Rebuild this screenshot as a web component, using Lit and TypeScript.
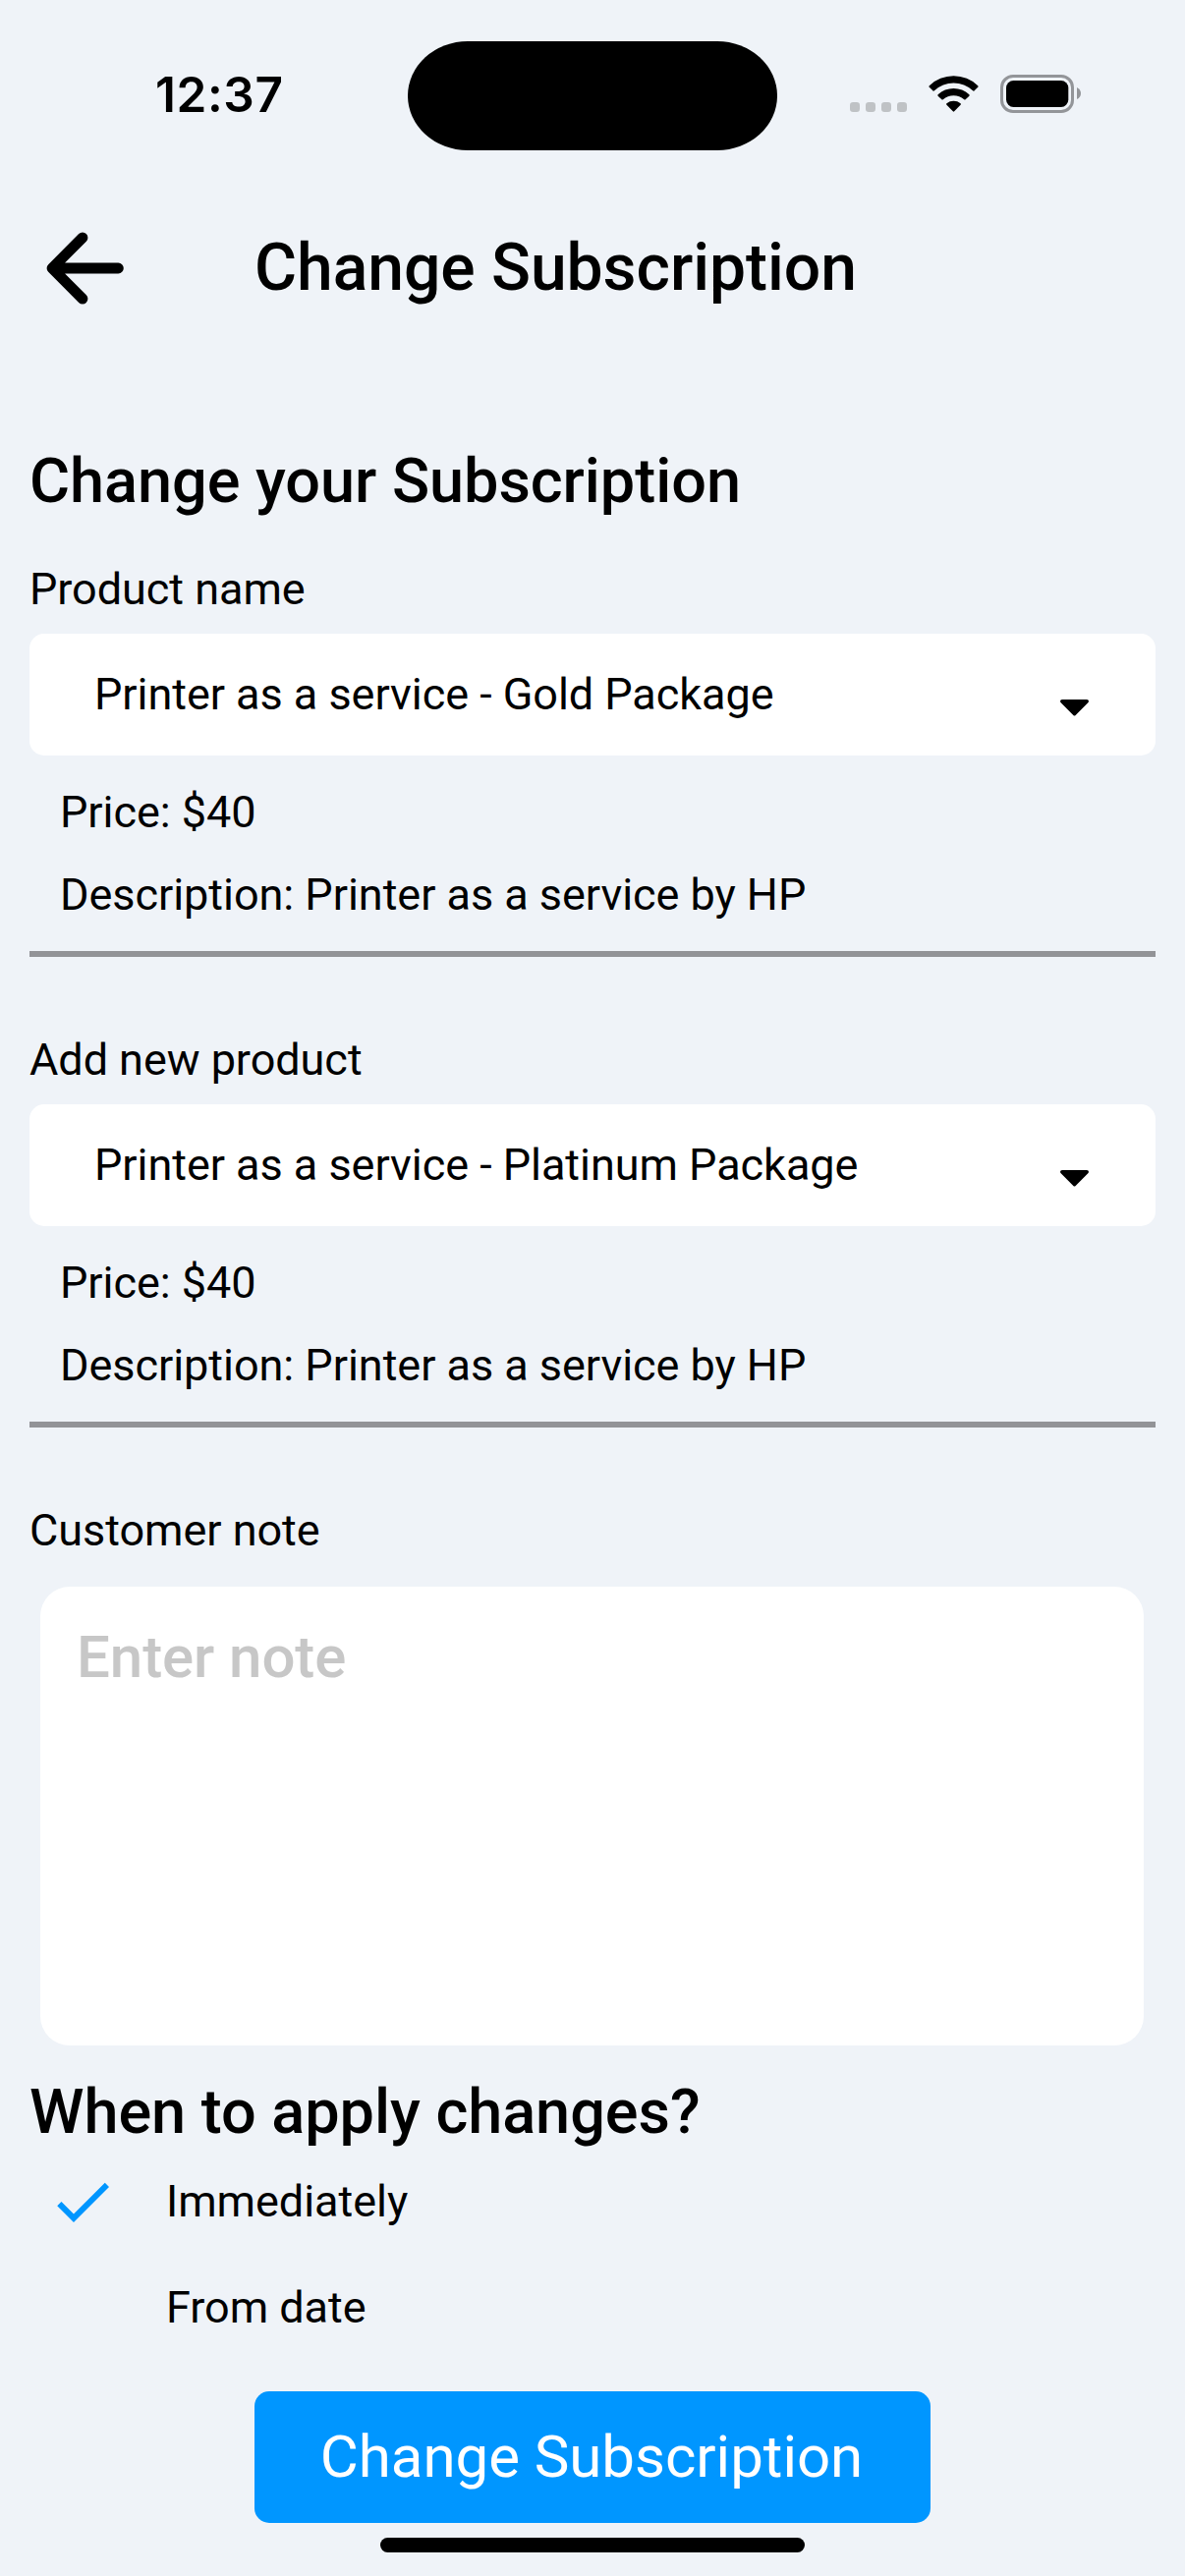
import { LitElement, html, css, svg, nothing } from "lit";
import { customElement, property, state } from "lit/decorators.js";

interface Product {
  label: string;
  name: string;
  price: string;
  description: string;
}

const PRODUCTS: Product[] = [
  {
    label: "Product name",
    name: "Printer as a service - Gold Package",
    price: "$40",
    description: "Printer as a service by HP",
  },
  {
    label: "Add new product",
    name: "Printer as a service - Platinum Package",
    price: "$40",
    description: "Printer as a service by HP",
  },
];

const TIMINGS = ["Immediately", "From date"];

@customElement("status-bar")
class StatusBar extends LitElement {
  static styles = css`
    :host {
      display: grid;
      grid-template-columns: 415px 376px 415px;
      height: 177px;
    }
    .time {
      padding: 66px 0 0 158px;
      font: 600 49.5px/60px Inter, "Liberation Sans", sans-serif;
      letter-spacing: 0.6px;
    }
    .island {
      margin-top: 41.5px;
      height: 111px;
      border-radius: 61px / 55.5px;
      background: #000;
    }
    .icons {
      display: block;
      margin: 70px 0 0 69px;
    }
  `;

  render() {
    return html`
      <div class="time">12:37</div>
      <div class="island"></div>
      <svg class="icons" width="250" height="50" viewBox="860 70 250 50">
        <g fill="#bfc2c5">
          ${[865, 881, 897, 913].map(
            (x) => svg`<rect x=${x} y="104" width="10" height="10" rx="3.2" />`
          )}
        </g>
        <g fill="#000">
          <path d="M945.8 87.2Q945 88 945.8 88.8L949.6 92.4Q950.2 93 950.9 92.3A28.6 28.6 0 0 1 990.1 92.3Q990.8 93 991.4 92.4L995.2 88.8Q996 88 995.2 87.2A35.6 35.6 0 0 0 945.8 87.2Z" />
          <path d="M954.6 96.2Q954 97 954.6 97.7L958.4 101.3Q959.1 101.9 959.8 101.2A16.4 16.4 0 0 1 981.2 101.2Q981.9 101.9 982.6 101.3L986.4 97.7Q987 97 986.4 96.2A23.4 23.4 0 0 0 954.6 96.2Z" />
          <path d="M963.4 105.3Q962.8 106 963.4 106.8L969.8 113.3Q970.5 114 971.2 113.3L977.6 106.8Q978.2 106 977.6 105.3A11.4 11.4 0 0 0 963.4 105.3Z" />
        </g>
        <rect x="1019.5" y="77.5" width="72" height="36" rx="11.5" fill="none" stroke="#939599" stroke-width="3" />
        <rect x="1024" y="82" width="63.3" height="27" rx="7.5" />
        <path d="M1096 89Q1100 91 1100 95T1096 101Z" fill="#939599" />
      </svg>
    `;
  }
}

@customElement("product-picker")
class ProductPicker extends LitElement {
  @property({ attribute: false }) product!: Product;

  static styles = css`
    :host {
      display: flex;
      flex-direction: column;
      font-size: 45px;
      line-height: 54px;
    }
    .select {
      display: flex;
      align-items: center;
      justify-content: space-between;
      box-sizing: border-box;
      height: 124px;
      margin-top: 18px;
      padding: 0 68px 0 66px;
      border-radius: 15px;
      background: #fff;
    }
    .caret {
      margin-top: 26px;
    }
    .details {
      display: flex;
      flex-direction: column;
      gap: 30px;
      padding: 31px 31px 30px;
      border-bottom: 6px solid #929397;
    }
  `;

  render() {
    const { label, name, price, description } = this.product;
    return html`
      <div>${label}</div>
      <div class="select">
        <span>${name}</span>
        <svg class="caret" width="29" height="17" viewBox="0 0 29 17">
          <path d="M2 0H27Q29 .2 29 1.8Q29 2.6 28.3 3.3L15.4 16.2Q14.5 17 13.6 16.2L.7 3.3Q0 2.6 0 1.8Q0 .2 2 0Z" />
        </svg>
      </div>
      <div class="details">
        <div>Price: ${price}</div>
        <div>Description: ${description}</div>
      </div>
    `;
  }
}

@customElement("app-root")
class AppRoot extends LitElement {
  @state() private timing = TIMINGS[0];

  static styles = css`
    :host {
      display: flex;
      flex-direction: column;
      box-sizing: border-box;
      width: 1206px;
      height: 2622px;
      overflow: hidden;
      background: #eff3f8;
      color: #000;
      font-family: Roboto, "Liberation Sans", sans-serif;
      font-size: 45px;
      line-height: 54px;
      letter-spacing: -0.04px;
    }
    .header {
      display: flex;
      align-items: center;
      height: 191px;
      padding-left: 47px;
    }
    .title {
      margin: 0 0 0 132px;
      font-size: 66px;
      font-weight: 500;
      line-height: 78px;
    }
    .content {
      display: flex;
      flex-direction: column;
      padding: 84px 30px 0;
    }
    .heading {
      margin: 0;
      padding-top: 1px;
      font-size: 63px;
      font-weight: 500;
      line-height: 74px;
    }
    .products {
      display: flex;
      flex-direction: column;
      gap: 78px;
      margin: 46px 0 78px;
    }
    .note {
      display: block;
      box-sizing: border-box;
      height: 467px;
      margin: 30px 12px 30px 11px;
      padding: 37px;
      border: 0;
      border-radius: 30px;
      outline: 0;
      resize: none;
      background: #fff;
      font: 500 60px/70px Roboto, "Liberation Sans", sans-serif;
      letter-spacing: -0.08px;
    }
    .note::placeholder {
      color: #c7c7c7;
      opacity: 1;
    }
    .options {
      display: flex;
      flex-direction: column;
      padding: 0 0 31px 18px;
    }
    .option {
      display: grid;
      grid-template-columns: 72px auto;
      column-gap: 49px;
      align-items: center;
      height: 108px;
    }
    .mark {
      height: 72px;
    }
    .check {
      display: block;
      fill: #0096ff;
    }
    .submit {
      align-self: center;
      width: 688px;
      height: 134px;
      padding: 0 2px 0 0;
      border: 0;
      border-radius: 15px;
      background: #0096ff;
      color: #fff;
      font: 400 60px/70px Roboto, "Liberation Sans", sans-serif;
      letter-spacing: -0.04px;
    }
    .home {
      align-self: center;
      width: 432px;
      height: 15px;
      margin-top: 15px;
      border-radius: 8px;
      background: #000;
    }
  `;

  render() {
    return html`
      <status-bar></status-bar>
      <header class="header">
        <svg width="80" height="74" viewBox="47 235.5 80 74" fill="none" stroke="#000" stroke-width="10.8" stroke-linecap="round" stroke-linejoin="round">
          <path d="M120.4 272.5H53M84 241.4L53 272.5L84 303.6" />
        </svg>
        <h1 class="title">Change Subscription</h1>
      </header>
      <main class="content">
        <h2 class="heading">Change your Subscription</h2>
        <div class="products">
          ${PRODUCTS.map((p) => html`<product-picker .product=${p}></product-picker>`)}
        </div>
        <div>Customer note</div>
        <textarea class="note" placeholder="Enter note"></textarea>
        <h2 class="heading">When to apply changes?</h2>
        <div class="options">
          ${TIMINGS.map(
            (t) => html`
              <div class="option" @click=${() => (this.timing = t)}>
                <div class="mark">
                  ${t === this.timing
                    ? html`<svg class="check" width="72" height="72" viewBox="0 0 24 24">
                        <path d="M9 16.17L4.83 12l-1.42 1.41L9 19 21 7l-1.41-1.41z" />
                      </svg>`
                    : nothing}
                </div>
                <span>${t}</span>
              </div>
            `
          )}
        </div>
      </main>
      <button class="submit">Change Subscription</button>
      <div class="home"></div>
    `;
  }
}
